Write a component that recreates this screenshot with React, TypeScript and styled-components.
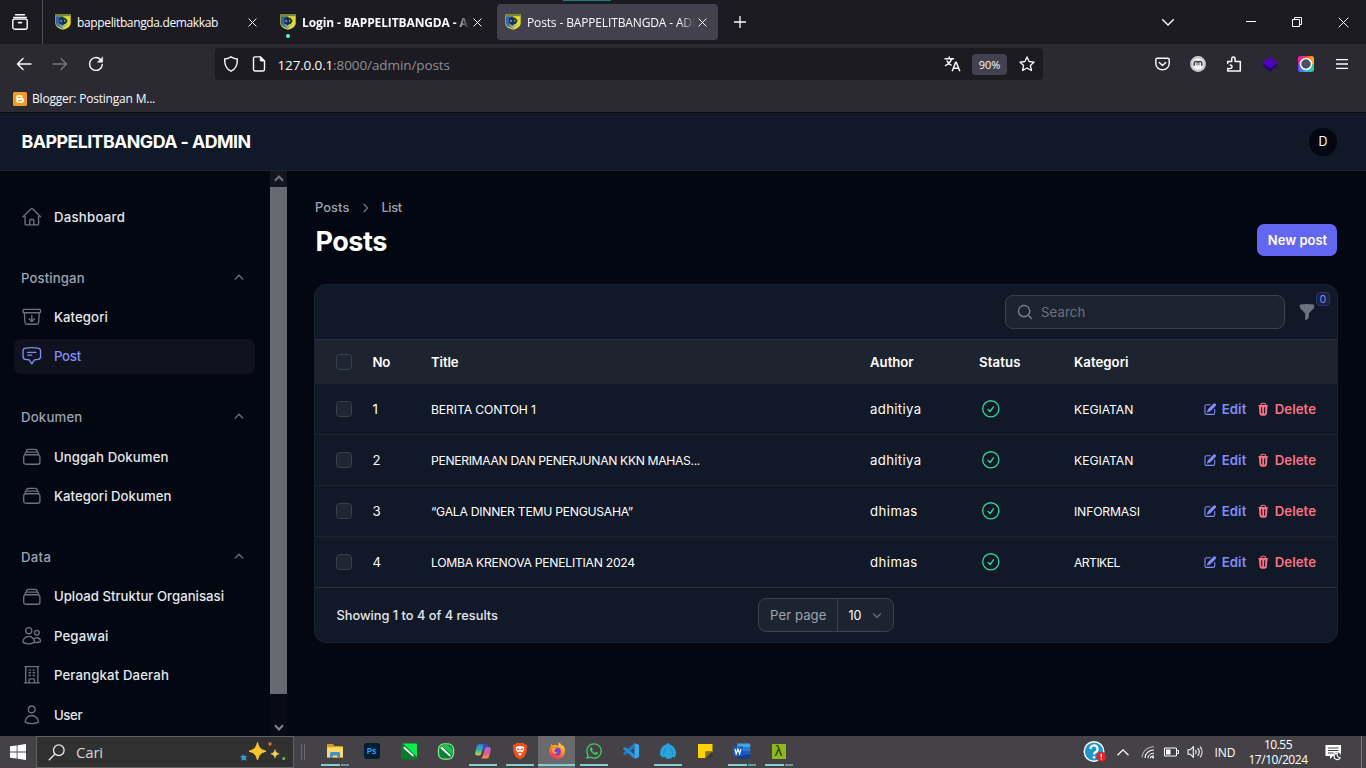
import React from "react";
import styled, { createGlobalStyle } from "styled-components";
import {
  HiOutlineHome,
  HiOutlineArchiveBoxArrowDown,
  HiOutlineChatBubbleBottomCenterText,
  HiOutlineRectangleStack,
  HiOutlineUsers,
  HiOutlineBuildingOffice,
  HiOutlineUser,
  HiOutlineCheckCircle,
  HiMiniChevronUp,
  HiMiniChevronDown,
  HiMiniChevronRight,
  HiMiniMagnifyingGlass,
  HiMiniFunnel,
  HiMiniPencilSquare,
  HiMiniTrash,
} from "react-icons/hi2";
import { FaWhatsapp } from "react-icons/fa";

const Global = createGlobalStyle`
  * { box-sizing: border-box; }
  body { margin: 0; background: #030712; overflow: hidden; }
  svg { display: block; flex: none; }
`;

const chromeFont = `"Open Sans", "Noto Sans", sans-serif`;
const appFont = `Inter, "Open Sans", sans-serif`;

type Track = { $track?: number };

const Screen = styled.div`
  display: flex;
  flex-direction: column;
  width: 1366px;
  height: 768px;
  overflow: hidden;
  font-family: ${appFont};
`;

const Label = styled.span<Track & { $caps?: boolean }>`
  letter-spacing: ${(p) => p.$track ?? 0}px;
  white-space: nowrap;
  ${(p) => p.$caps && "font-size: 12.2px;"}
`;

/* ---------- browser chrome ---------- */

const TabStrip = styled.div`
  display: flex;
  height: 44px;
  background: #1c1b22;
  color: #fbfbfe;
  font: 12px ${chromeFont};
`;

const RecentTabs = styled.div`
  display: flex;
  align-items: center;
  width: 43px;
  padding-left: 12px;
  border-right: 1px solid #4d4c55;
  margin-right: 4px;
`;

const Tab = styled.div<{ $active?: boolean; $bold?: boolean }>`
  position: relative;
  display: flex;
  align-items: center;
  width: 221px;
  height: 36px;
  margin: 4px 4px 0 0;
  padding: 0 11px 0 8px;
  border-radius: 4px;
  background: ${(p) => (p.$active ? "#42414d" : "transparent")};
  font-weight: ${(p) => (p.$bold ? 700 : 400)};
`;

const TabTitle = styled.div<{ $fade?: boolean } & Track>`
  flex: 1;
  margin: 0 3px 0 6px;
  overflow: hidden;
  white-space: nowrap;
  letter-spacing: ${(p) => p.$track ?? 0}px;
  ${(p) => p.$fade && "mask-image: linear-gradient(to right, #000 91%, transparent 100%);"}
`;

const UnreadDot = styled.i`
  position: absolute;
  left: 14px;
  top: 30px;
  width: 4px;
  height: 4px;
  border-radius: 50%;
  background: #54ffbd;
`;

const LoadStrip = styled.i`
  position: absolute;
  left: 66px;
  top: -4px;
  width: 48px;
  height: 1px;
  background: #1f7d7d;
`;

const NewTab = styled.div`
  display: flex;
  align-items: center;
  padding-left: 12px;
`;

const WindowButtons = styled.div`
  display: flex;
  align-items: center;
  margin-left: auto;
`;

const WindowButton = styled.div<{ $w: number }>`
  display: flex;
  justify-content: center;
  width: ${(p) => p.$w}px;
`;

const Toolbar = styled.div`
  display: flex;
  align-items: center;
  height: 40px;
  padding: 0 6px;
  background: #2b2a33;
  color: #fbfbfe;
  font-family: ${chromeFont};
`;

const ToolSlot = styled.div<{ $dim?: boolean }>`
  display: flex;
  align-items: center;
  justify-content: center;
  width: 36px;
  height: 32px;
  color: ${(p) => (p.$dim ? "#76757d" : "#fbfbfe")};
`;

const AddressBar = styled.div`
  display: flex;
  align-items: center;
  width: 828px;
  height: 32px;
  margin-left: 101px;
  padding: 0 8px;
  border-radius: 4px;
  background: #1c1b22;
  font-size: 13.5px;
  & > svg + svg { margin-left: 12px; }
`;

const Address = styled.div`
  flex: 1;
  margin-left: 10.5px;
  padding-top: 1px;
  color: #8f8e96;
  letter-spacing: -0.09px;
  b { font-weight: 400; color: #fbfbfe; letter-spacing: -0.15px; }
`;

const ZoomBadge = styled.div`
  width: 35px;
  height: 21px;
  margin: 0 12px 0 11px;
  border-radius: 4px;
  background: #42414d;
  font-size: 11px;
  line-height: 21px;
  text-align: center;
`;

const Extensions = styled.div`
  display: flex;
  margin-left: auto;
`;

const BookmarkBar = styled.div`
  display: flex;
  align-items: center;
  gap: 5px;
  height: 29px;
  padding: 1px 0 0 13px;
  border-bottom: 1px solid #0b0b12;
  background: #2b2a33;
  color: #fbfbfe;
  font: 12px ${chromeFont};
`;

/* ---------- admin app ---------- */

const TopBar = styled.header`
  display: flex;
  align-items: center;
  justify-content: space-between;
  height: 58px;
  padding: 0 29px 0 21.5px;
  border-bottom: 1px solid #1f2533;
  background: #111827;
`;

const Brand = styled.div`
  color: #fff;
  font-size: 17.8px;
  font-weight: 700;
  letter-spacing: -0.55px;
`;

const Avatar = styled.div`
  width: 28px;
  height: 28px;
  border-radius: 50%;
  background: #030712;
  color: #fff;
  font-size: 12.4px;
  line-height: 28px;
  text-align: center;
`;

const Body = styled.div`
  display: flex;
  height: 565px;
  background: #030712;
`;

const Sidebar = styled.nav`
  display: flex;
  flex-direction: column;
  gap: 26px;
  width: 270px;
  height: 565px;
  padding: 28px 15px 0 14px;
  overflow: hidden;
`;

const NavGroup = styled.div`
  display: flex;
  flex-direction: column;
  gap: 4.4px;
`;

const GroupHeader = styled.div`
  display: flex;
  align-items: center;
  justify-content: space-between;
  height: 35px;
  padding: 0 7px;
  color: #9ca3af;
  font-size: 13.2px;
  font-weight: 500;
  svg { color: #6b7280; }
`;

const NavItem = styled.a<{ $active?: boolean }>`
  display: flex;
  align-items: center;
  gap: 11.3px;
  height: 35px;
  padding: 0 7px;
  border-radius: 7px;
  background: ${(p) => (p.$active ? "#10131d" : "transparent")};
  color: ${(p) => (p.$active ? "#818cf8" : "#e5e7eb")};
  font-size: 13.2px;
  font-weight: 500;
  svg { color: ${(p) => (p.$active ? "#818cf8" : "#6b7280")}; }
`;

const ScrollTrack = styled.div`
  display: flex;
  flex-direction: column;
  width: 17px;
  background: #090b14;
`;

const ScrollArrow = styled.div<{ $h: number; $bg?: string }>`
  display: flex;
  align-items: flex-end;
  justify-content: center;
  height: ${(p) => p.$h}px;
  padding-bottom: 5px;
  background: ${(p) => p.$bg ?? "transparent"};
`;

const ScrollThumb = styled.div`
  height: 507px;
  background: #686971;
`;

const Main = styled.main`
  flex: 1;
  padding: 27px 29px 0 28px;
`;

const Crumbs = styled.div`
  display: flex;
  align-items: center;
  gap: 7px;
  height: 20px;
  margin-top: -0.5px;
  color: #9ca3af;
  font-size: 12.8px;
  font-weight: 500;
  svg { color: #6b7280; }
`;

const TitleRow = styled.div`
  display: flex;
  align-items: center;
  justify-content: space-between;
  height: 32px;
  margin: 6.5px 0 28px;
`;

const Heading = styled.h1`
  margin: 0;
  padding: 3px 0 0 0.5px;
  color: #fff;
  font-size: 27px;
  line-height: 32px;
  font-weight: 700;
  letter-spacing: -0.5px;
`;

const PrimaryButton = styled.button`
  width: 80px;
  height: 32px;
  padding: 0 0 0 1px;
  border: 0;
  border-radius: 7px;
  background: #6366f1;
  color: #fff;
  font: 600 13px ${appFont};
  letter-spacing: 0;
`;

const Card = styled.section`
  height: 359px;
  margin: 0 -1px;
  border: 1px solid #1a2130;
  border-radius: 12px;
  background: #111827;
  overflow: hidden;
  color: #fff;
  font-size: 13.2px;
`;

const CardTools = styled.div`
  display: flex;
  align-items: center;
  justify-content: flex-end;
  height: 54px;
  padding-right: 22px;
`;

const SearchBox = styled.div`
  display: flex;
  align-items: center;
  gap: 7px;
  width: 280px;
  height: 34px;
  padding: 0 0 1px 10px;
  border: 1px solid #3a424f;
  border-radius: 8px;
  background: #1d2431;
  color: #6b7280;
  svg { color: #7b828e; }
`;

const FilterButton = styled.div`
  position: relative;
  width: 18px;
  margin: 0 -1px 0 13px;
  color: #6b7280;
`;

const FilterCount = styled.span`
  position: absolute;
  left: 18px;
  top: -11px;
  width: 14px;
  height: 14px;
  border: 1px solid #303669;
  border-radius: 4px;
  background: #1a2040;
  color: #818cf8;
  font-size: 10.8px;
  line-height: 13px;
  text-align: center;
`;

const GridRow = styled.div<{ $head?: boolean; $last?: boolean }>`
  display: grid;
  grid-template-columns: 57.5px 58.5px 439px 109px 95px 100px 1fr;
  align-items: center;
  height: ${(p) => (p.$head ? 45 : 51)}px;
  padding-right: 21px;
  padding-bottom: ${(p) => (p.$head ? 1 : 0)}px;
  border-top: ${(p) => (p.$head ? "1px solid #29313d" : "0")};
  border-bottom: ${(p) => (p.$head ? "0" : p.$last ? "1px solid #29303d" : "1px solid #1d2431")};
  background: ${(p) => (p.$head ? "#1d2430" : "transparent")};
  font-weight: ${(p) => (p.$head ? 600 : 400)};
  & > svg { margin-left: 0.8px; }
`;

const CheckBox = styled.i`
  width: 16px;
  height: 16px;
  margin-left: 21px;
  border: 1px solid #3a414e;
  border-radius: 4px;
  background: #1f2532;
`;

const Actions = styled.div`
  display: flex;
  justify-content: flex-end;
  gap: 10px;
  font-weight: 600;
`;

const ActionLink = styled.a<{ $tone: string }>`
  display: flex;
  align-items: center;
  gap: 4px;
  color: ${(p) => p.$tone};
`;

const CardFooter = styled.div`
  display: grid;
  grid-template-columns: 1fr auto 1fr;
  align-items: center;
  height: 54px;
  padding-left: 21.5px;
`;

const Summary = styled.div`
  padding-top: 1px;
  color: #e5e7eb;
  font-size: 12.8px;
  font-weight: 500;
  letter-spacing: 0;
`;

const PageSize = styled.div`
  display: flex;
  align-items: center;
  width: 136px;
  height: 34px;
  margin-right: 21.5px;
  border: 1px solid #3a424f;
  border-radius: 8px;
  background: #1d2431;
`;

const PageSizeLabel = styled.div`
  width: 79px;
  height: 32px;
  line-height: 33px;
  padding-left: 11px;
  border-right: 1px solid #3a424f;
  color: #9ca3af;
`;

const PageSizeValue = styled.div`
  display: flex;
  flex: 1;
  align-items: center;
  justify-content: space-between;
  padding: 0 8px 0 10.5px;
  font-size: 12.6px;
  svg { color: #6b7280; }
`;

/* ---------- task bar ---------- */

const TaskBar = styled.footer`
  display: flex;
  height: 32px;
  background: #444246;
  color: #fff;
  font: 12px ${chromeFont};
`;

const StartButton = styled.div`
  width: 36px;
  padding: 8px 0 0 10px;
`;

const TaskSearch = styled.div`
  display: flex;
  align-items: center;
  width: 258px;
  padding: 0 6px 0 11px;
  border: 1px solid #626163;
  background: #313132;
  color: #d6d6d6;
  font-size: 15px;
`;

const SearchHint = styled.span`
  flex: 1;
  margin-left: 11px;
  letter-spacing: -0.2px;
`;

const Grip = styled.i`
  width: 4px;
  height: 16px;
  margin: 8px 11.5px 0 6.5px;
  border: solid #6a696c;
  border-width: 0 1px;
`;

const TaskCell = styled.div<{ $focus?: boolean }>`
  display: flex;
  flex-direction: column;
  align-items: center;
  width: 37px;
  padding-top: 6px;
  background: ${(p) => (p.$focus ? "#6a696c" : "transparent")};
`;

const TaskIcon = styled.div`
  display: flex;
  align-items: center;
  height: 18px;
`;

const RunningBar = styled.i<{ $wide?: boolean; $split?: boolean }>`
  width: ${(p) => (p.$wide ? 37 : 28)}px;
  height: 2px;
  margin-top: 4px;
  background: ${(p) =>
    p.$split ? "linear-gradient(to right, #83cfd2 19px, #444246 19px 20px, #639a9e 20px)" : "#83cfd2"};
`;

const Tray = styled.div`
  display: flex;
  align-items: center;
  margin-left: auto;
`;

const TraySlot = styled.div<{ $w: number }>`
  display: flex;
  justify-content: center;
  width: ${(p) => p.$w}px;
`;

const Clock = styled.div`
  width: 71px;
  padding-bottom: 1px;
  font-size: 12px;
  line-height: 15px;
  text-align: center;
`;

const DesktopEdge = styled.i`
  width: 1px;
  height: 32px;
  margin: 0 4px 0 8.5px;
  background: #77767a;
`;

/* ---------- drawings ---------- */

const Crest = () => (
  <svg width="16" height="16" viewBox="0 0 16 16">
    <path d="M.3.4h15.4v8.8c0 3-3.200 5.300-7.700 6.600C3.500 14.500.3 12.200.3 9.200z" fill="#e4dc2c" />
    <path d="M.8 2.200h7.400v12.600C4 13.300.8 11.600.8 9z" fill="#3565a8" />
    <path d="M.4.400h15.200v1.800H.4z" fill="#7c8438" />
    <path d="M4 4.200 7 3l3.500 1 2.200 2.500-1.500 3L8 11 4.400 9.200z" fill="#17324a" />
    <path d="M5 5.500 7.200 7 6 8.200z" fill="#b5d0dc" />
    <path d="m9 5.600 2 1-2 1.400z" fill="#7fae52" />
    <path d="M2.800 9.500 8 12.300l5-2.500L8 14.900z" fill="#9cae9f" />
  </svg>
);

const Cross = ({ size = 9, w = 1.1 }: { size?: number; w?: number }) => (
  <svg width={size} height={size} viewBox="0 0 10 10" stroke="#fbfbfe" strokeWidth={w}>
    <path d="m.6.6 8.800 8.800M9.400.6.6 9.400" />
  </svg>
);

const line = { fill: "none", stroke: "currentColor", strokeWidth: 1.4, strokeLinecap: "round", strokeLinejoin: "round" } as const;

const RecentIcon = () => (
  <svg width="16" height="16" viewBox="0 0 16 16" {...line}>
    <path d="M3.500.8h9M1.600 3.400h12.800" />
    <rect x=".8" y="5" width="14.400" height="10.200" rx="2" />
    <path d="M6.500 8.600h3" strokeWidth="1.600" />
  </svg>
);

const BackIcon = ({ flip }: { flip?: boolean }) => (
  <svg width="16" height="16" viewBox="0 0 16 16" {...line} transform={flip ? "scale(-1 1)" : undefined}>
    <path d="M15 8H1.500M7 2.500 1.500 8 7 13.500" />
  </svg>
);

const ReloadIcon = () => (
  <svg width="16" height="16" viewBox="0 0 16 16" {...line}>
    <path d="M14.300 8.500A6.400 6.400 0 1 1 12.500 3.500" />
    <path d="M14.600 1.200v5H9.600z" fill="currentColor" strokeWidth=".5" />
  </svg>
);

const ShieldIcon = () => (
  <svg width="16" height="16" viewBox="0 0 16 16" {...line}>
    <path d="M8 .8c2 1.300 4.200 2 6.300 2.200.3 5.500-1.500 9.800-6.300 12.200C3.200 12.800 1.400 8.500 1.700 3 3.800 2.800 6 2.100 8 .8z" />
  </svg>
);

const PageIcon = () => (
  <svg width="16" height="16" viewBox="0 0 16 16" {...line}>
    <path d="M2.500 2.300c0-.8.6-1.400 1.400-1.400H9.500l4 4v8.700c0 .8-.6 1.400-1.400 1.400H3.900c-.8 0-1.400-.6-1.400-1.400z" />
    <path d="M9.300 1v4h4z" fill="currentColor" strokeWidth=".8" />
  </svg>
);

const TranslateIcon = () => (
  <svg width="17" height="16" viewBox="0 0 17 16" {...line} strokeWidth="1.500" strokeLinecap="butt">
    <path d="M.5 2.700h9.500M5.200.4v2.300M1 9.800C4.500 8 7 5.800 7.700 2.700M2.800 4.500c.8 2 2.300 3.600 4.700 4.800" />
    <path d="m8.200 15.300 3.500-9h.6l3.500 9M9.400 12.300h5.200" />
  </svg>
);

const StarIcon = () => (
  <svg width="16" height="16" viewBox="0 0 16 16" {...line} strokeWidth="1.300">
    <path d="m8 .9 2.100 4.600 5 .6-3.700 3.400 1 5L8 12l-4.400 2.500 1-5L.9 6.100l5-.6z" />
  </svg>
);

const PocketIcon = () => (
  <svg width="15" height="16" viewBox="0 0 15 16" {...line}>
    <path d="M2.200 2.300h10.600c.8 0 1.400.6 1.400 1.400v3.800c0 3.700-3 6.300-6.700 6.300S.8 11.200.8 7.500V3.700c0-.8.6-1.400 1.400-1.400zM4.300 6.400l3.200 3 3.200-3" />
  </svg>
);

const MaskIcon = () => (
  <svg width="16" height="16" viewBox="0 0 16 16">
    <circle cx="8" cy="8" r="7.900" fill="#d4d4d8" />
    <circle cx="8" cy="8" r="6.400" fill="#f2f2f4" stroke="#a5a4aa" strokeWidth=".7" />
    <path d="M4.200 9.800V7.200c0-2 2.600-2 3.800-1 1.200-1 3.800-1 3.800 1v2.600" fill="none" stroke="#3d3c43" strokeWidth="1.600" />
    <path d="M7 6.800v2.500M9 6.800v2.500" stroke="#3d3c43" strokeWidth=".9" />
  </svg>
);

const PuzzleIcon = () => (
  <svg width="16" height="16" viewBox="0 0 16 16" {...line} strokeWidth="1.500">
    <path d="M1.700 7.300V5.500h4V2.800a1.700 1.700 0 0 1 3.400 0v2.700h5.200v9.600H1.700v-2.500h2.500a1.800 1.800 0 0 0 0-3.600" />
  </svg>
);

const DiamondIcon = () => (
  <svg width="16" height="16" viewBox="0 0 16 16">
    <path d="M8 4.500 15.800 9.200 8 15.800.2 9.200z" fill="#230273" />
    <path d="M8 .2 15.800 7 8 12.600.2 7z" fill="#4c05b5" />
  </svg>
);

const LensIcon = () => (
  <svg width="16" height="16" viewBox="0 0 16 16">
    <defs>
      <linearGradient id="lensTop" x1="0" x2="1">
        <stop offset="0" stopColor="#e91ec2" />
        <stop offset=".45" stopColor="#f5333f" />
        <stop offset="1" stopColor="#f7b91c" />
      </linearGradient>
      <linearGradient id="lensBottom" x1="0" x2="1">
        <stop offset="0" stopColor="#6b45ff" />
        <stop offset=".5" stopColor="#28b7f2" />
        <stop offset="1" stopColor="#2fd07a" />
      </linearGradient>
    </defs>
    <path d="M0 8V2.500A2.500 2.500 0 0 1 2.500 0h11A2.500 2.500 0 0 1 16 2.500V8z" fill="url(#lensTop)" />
    <path d="M0 8h16v5.500a2.500 2.500 0 0 1-2.500 2.500h-11A2.500 2.500 0 0 1 0 13.500z" fill="url(#lensBottom)" />
    <circle cx="8" cy="8" r="5.500" fill="#4a5060" stroke="#fff" strokeWidth="1.500" />
  </svg>
);

const MenuIcon = () => (
  <svg width="12" height="10" viewBox="0 0 12 10" stroke="#fbfbfe" strokeWidth="1.300">
    <path d="M0 .7h12M0 5h12M0 9.300h12" />
  </svg>
);

const BloggerIcon = () => (
  <svg width="14" height="14" viewBox="0 0 14 14">
    <rect width="14" height="14" rx="1.500" fill="#f79a1f" />
    <path d="M3.300 5a2 2 0 0 1 2-2h2.200a2 2 0 0 1 2 2c0 .9.100 1.200.700 1.300.4.100.6.300.6.900V9a2 2 0 0 1-2 2H5.300a2 2 0 0 1-2-2z" fill="#fff" />
    <path d="M5.500 5.400h1.600M5.500 8.600h3" stroke="#f79a1f" strokeWidth="1.100" strokeLinecap="round" />
  </svg>
);

const WindowsLogo = () => (
  <svg width="16" height="16" viewBox="0 0 16 16" fill="#fff">
    <path d="M0 2.300 6.700 1.400v6.200H0zM7.500 1.300 16 .1v7.500H7.500zM0 8.400h6.700v6.200L0 13.700zM7.500 8.400H16v7.500l-8.500-1.200z" />
  </svg>
);

const MagnifierIcon = () => (
  <svg width="17" height="17" viewBox="0 0 17 17" fill="none" stroke="#e8e8e8" strokeWidth="1.300">
    <circle cx="10.800" cy="6.200" r="5.300" />
    <path d="M7 10 .8 16.200" />
  </svg>
);

const Sparkles = () => (
  <svg width="48" height="24" viewBox="0 0 48 24">
    <path d="M18.500 2.500c1.500 5.500 3 7 8.500 8.700-5.500 1.700-7 3.200-8.500 8.800-1.500-5.600-3-7.100-8.500-8.800 5.500-1.700 7-3.200 8.500-8.700z" fill="#fbc52a" stroke="#fbc52a" strokeLinejoin="round" />
    <path d="M36 9.500c.7 2.700 1.500 3.500 4.200 4.300-2.700.800-3.500 1.600-4.200 4.300-.7-2.700-1.500-3.500-4.200-4.300 2.700-.8 3.500-1.600 4.200-4.300z" fill="#f8d257" stroke="#f8d257" strokeWidth=".5" strokeLinejoin="round" />
    <path d="m4 14 1.500 2 2.300-.2-1 2.300.8 2.400-2.700-.8-2.500 1.100.300-2.700L1 16.300l2.400-.200z" fill="#2e9bd8" />
    <circle cx="31" cy="4" r="1.700" fill="#e0702f" />
    <circle cx="44.800" cy="18.500" r="1.500" fill="#79b84a" />
  </svg>
);

const FolderIcon = () => (
  <svg width="18" height="18" viewBox="0 0 18 18">
    <path d="M1 2h6l1.500 2H17v12H1z" fill="#d69a1d" />
    <path d="M1 5.200h16V15H1z" fill="#fbd96b" />
    <path d="M4 16v-4.500c0-1 .6-1.600 1.600-1.600h6.800c1 0 1.600.6 1.600 1.600V16h-2.700v-2.500H6.700V16z" fill="#3f8fd1" />
  </svg>
);

const PsTile = styled.div`
  width: 16px;
  height: 16px;
  border-radius: 3px;
  background: #001d34;
  color: #31a8ff;
  font: 600 9px/15px ${chromeFont};
  text-align: center;
`;

const CorelIcon = ({ round }: { round?: boolean }) => (
  <svg width="18" height="17" viewBox="0 0 18 17">
    {round ? (
      <>
        <rect x="1.500" y=".8" width="15" height="15.400" rx="5.500" fill="#07803a" stroke="#8be68a" strokeWidth="1.300" />
        <path d="M4 2.500A8 8 0 0 1 15.500 8v4z" fill="#1fc24b" />
      </>
    ) : (
      <>
        <rect x="1" y=".5" width="16" height="16" rx="1" fill="#087a2a" />
        <path d="M3 .5h13a1 1 0 0 1 1 1V14z" fill="#0aee4b" />
      </>
    )}
    <path d="m4.500 3.500 8.500 8 1.200 2.200-2.400-.9-8.600-7.700z" fill="#fff" />
  </svg>
);

const CopilotIcon = () => (
  <svg width="18" height="18" viewBox="0 0 18 18">
    <defs>
      <linearGradient id="copA" x1="0" y1="0" x2="0" y2="1">
        <stop offset="0" stopColor="#2b7de0" />
        <stop offset=".6" stopColor="#3dbb9b" />
        <stop offset="1" stopColor="#e9c93b" />
      </linearGradient>
      <linearGradient id="copB" x1="0" y1="0" x2="0" y2="1">
        <stop offset="0" stopColor="#a46be8" />
        <stop offset=".55" stopColor="#e0598e" />
        <stop offset="1" stopColor="#f59a45" />
      </linearGradient>
    </defs>
    <path d="M5.500 2h5.800c-1.500.6-2 2-2.500 4L7.300 11.500c-.5 1.500-1.300 2-2.600 2H3.500C1.500 13.500.8 12 1.300 10l1.400-5.500C3.200 2.800 4 2 5.500 2z" fill="url(#copA)" />
    <path d="M12.500 16.500H6.700c1.500-.6 2-2 2.500-4L10.700 7c.5-1.500 1.300-2 2.600-2h1.200c2 0 2.700 1.500 2.200 3.500L15.300 14c-.5 1.700-1.300 2.500-2.800 2.500z" fill="url(#copB)" />
    <path d="M8.500 2h3c1.500 0 2 .8 2.500 3-2.200 0-3 .6-3.600 2.600L9 12c0-3 .5-6-.5-10z" fill="#2a50c4" />
  </svg>
);

const BraveIcon = () => (
  <svg width="18" height="18" viewBox="0 0 18 18">
    <path d="M5.500 1h7l1.300 1.500 1.700-.1.800 2.600-.8 1.500.5 2-2.300 6L9 17.500 4.300 14.500 2 8.500l.5-2L1.700 5l.8-2.600 1.700.1z" fill="#f0501f" />
    <path d="M5 4.700 9 4l4 .7.300 2.500-1.800 3L9 9.400l-2.500.8-1.800-3zM6.800 11.800 9 10.800l2.200 1L9 13.800z" fill="#fff" />
    <path d="m5.800 6.200 2 .6L9 8.500l1.200-1.700 2-.6-.6 2L9 7.800l-2.600.4z" fill="#f0501f" />
  </svg>
);

const FirefoxIcon = () => (
  <svg width="18" height="18" viewBox="0 0 18 18">
    <defs>
      <linearGradient id="fox" x1=".8" y1="0" x2=".2" y2="1">
        <stop offset="0" stopColor="#ffdf3d" />
        <stop offset=".45" stopColor="#ff8a1f" />
        <stop offset="1" stopColor="#f0246b" />
      </linearGradient>
    </defs>
    <path d="M9.500 3.700c1-.8 1.300-2 1.200-3.200 2 1 3 2.300 3.500 3.700l.6-1.200c1.600 1.800 2.300 4 2.200 6.300A8 8 0 1 1 2.800 4l.3-2.200 1.600 1.800c1.600-.7 3.300-.6 4.800.1z" fill="url(#fox)" />
    <circle cx="9" cy="9.500" r="3.900" fill="#7a3bd6" />
    <path d="M4 6.500c2-1.500 3.500-.5 4.800.3-1.500.1-2.300 1-2.300 2 0 1.500 1.700 2.200 3.300 1.700-1 2-5 1.700-5.600-1z" fill="#ffa42b" />
  </svg>
);

const VsCodeIcon = () => (
  <svg width="18" height="18" viewBox="0 0 18 18">
    <path d="m12.500 1 4.500 2v12l-4.500 2z" fill="#35a9f2" />
    <path d="M12.500 1v4.700L3.200 13 1 11.700v-.5z" fill="#1d7fc9" />
    <path d="M12.500 17v-4.700L3.200 5 1 6.300v.5z" fill="#2490dc" />
  </svg>
);

const DolphinIcon = () => (
  <svg width="18" height="18" viewBox="0 0 18 18">
    <path d="M1.300 13.500C.6 8 2.800 3.800 7 2.500L9.500.8l1.200 1.700c4.500 1.200 7 6 6.200 10.500l-1.500 2.500-2.300-.8-.6 1.600-3 .6-2.600-.4-.6-1.700-1.900.8z" fill="#27a5dd" />
    <path d="M6.500 6c-1.500 2-2 4.500-1.500 7M10.500 5.500c2.500 2 3.500 5 3 7.500" stroke="#1779ad" strokeWidth=".7" fill="none" />
  </svg>
);

const NotesIcon = () => (
  <svg width="18" height="18" viewBox="0 0 18 18">
    <path d="M2 2h14.500v8.500L10 16H2z" fill="#fdd302" />
    <path d="M16.500 9.500V16H9.500V9.500z" fill="#3a3a3c" />
    <path d="M9.500 16V9.500h7z" fill="#8b7413" />
  </svg>
);

const WordIcon = () => (
  <svg width="18" height="18" viewBox="0 0 18 18">
    <path d="M4.500 1.500h12A.8.800 0 0 1 17.300 2.300V5H4z" fill="#41a5ee" />
    <path d="M4 5h13.300v4H4z" fill="#2b7cd3" />
    <path d="M4 9h13.300v3.800H4z" fill="#185abd" />
    <path d="M4 12.800h13.300v2.900a.8.800 0 0 1-.8.800H4.800a.8.800 0 0 1-.8-.8z" fill="#103f91" />
    <rect x="0" y="4.500" width="10" height="9.500" rx="1" fill="#185abd" />
    <path d="m2 6.800 1.200 5 1.700-4.800 1.700 4.800 1.300-5" fill="none" stroke="#fff" strokeWidth="1.200" />
  </svg>
);

const LambdaTile = styled.div`
  width: 14px;
  height: 15px;
  background: #8cb91c;
  color: #283a10;
  font: 14px/14px "DejaVu Sans", sans-serif;
  text-align: center;
`;

const HelpBadge = () => (
  <svg width="24" height="24" viewBox="0 0 24 24">
    <circle cx="11" cy="11.500" r="9.800" fill="#2096cf" stroke="#fff" strokeWidth="1.400" />
    <path d="M7.500 9a3.500 3.500 0 1 1 5.200 3c-1.200.7-1.700 1.200-1.700 2.600" fill="none" stroke="#fff" strokeWidth="2.200" />
    <circle cx="11" cy="17.200" r="1.300" fill="#fff" />
    <circle cx="18.300" cy="16.700" r="5" fill="#e02424" />
    <path d="M18.300 13.800v3.500M18.300 18.400v1.200" stroke="#fff" strokeWidth="1.400" />
  </svg>
);

const UpIcon = () => (
  <svg width="12" height="7" viewBox="0 0 12 7" fill="none" stroke="#fff" strokeWidth="1.200">
    <path d="M.5 6.300 6 .9l5.500 5.400" />
  </svg>
);

const WifiIcon = () => (
  <svg width="14" height="14" viewBox="0 0 14 14" fill="none" stroke="#fff" strokeWidth="1.100">
    <path d="M1 12.500A11.500 11.500 0 0 1 13 1.800" opacity=".6" />
    <path d="M4 13A8.500 8.500 0 0 1 13 5M6.800 13.200A6 6 0 0 1 13 8.300M9.200 13.300a4 4 0 0 1 3.800-2.500" />
    <circle cx="12" cy="12.600" r="1" fill="#fff" stroke="none" />
  </svg>
);

const BatteryIcon = () => (
  <svg width="15" height="10" viewBox="0 0 15 10">
    <path d="M.5 1h12v8H.5zM13 3.500h1.500v3H13" fill="none" stroke="#fff" />
    <path d="M2 2.500h4.500v5H2z" fill="#fff" />
  </svg>
);

const VolumeIcon = () => (
  <svg width="17" height="14" viewBox="0 0 17 14" fill="none" stroke="#fff" strokeWidth="1.100">
    <path d="M1 4.800h2.300l3-3v10.400l-3-3H1z" />
    <path d="M8.500 4.800c.9 1.300.9 3.100 0 4.400M10.700 3.200c1.800 2.200 1.800 5.400 0 7.600M13 1.600c2.700 3.200 2.700 7.600 0 10.800" />
  </svg>
);

const NoticeIcon = () => (
  <svg width="17" height="17" viewBox="0 0 17 17">
    <path d="M.5 1h15.500v11H8l-3 3v-3H.5z" fill="#fff" />
    <path d="M3 4h10.500M3 6.500h10.500M3 9h5.500" stroke="#444246" />
    <circle cx="12.300" cy="12" r="3.600" fill="#444246" />
    <path d="M12.300 9.200a3.300 3.300 0 0 0 2.900 4.500 3.200 3.200 0 1 1-2.900-4.500z" fill="none" stroke="#fff" strokeWidth="1.100" />
  </svg>
);

/* ---------- data ---------- */

type Item = { text: string; icon: React.ComponentType<any>; track: number; active?: boolean };
type Group = { title?: string; track?: number; items: Item[] };

const groups: Group[] = [
  { items: [{ text: "Dashboard", icon: HiOutlineHome, track: 0.27 }] },
  {
    title: "Postingan",
    track: 0.1,
    items: [
      { text: "Kategori", icon: HiOutlineArchiveBoxArrowDown, track: 0.08 },
      { text: "Post", icon: HiOutlineChatBubbleBottomCenterText, track: -0.18, active: true },
    ],
  },
  {
    title: "Dokumen",
    track: 0.18,
    items: [
      { text: "Unggah Dokumen", icon: HiOutlineRectangleStack, track: 0.11 },
      { text: "Kategori Dokumen", icon: HiOutlineRectangleStack, track: 0.03 },
    ],
  },
  {
    title: "Data",
    track: 0.3,
    items: [
      { text: "Upload Struktur Organisasi", icon: HiOutlineRectangleStack, track: 0.01 },
      { text: "Pegawai", icon: HiOutlineUsers, track: 0.17 },
      { text: "Perangkat Daerah", icon: HiOutlineBuildingOffice, track: 0.14 },
      { text: "User", icon: HiOutlineUser, track: -0.35 },
    ],
  },
];

const posts = [
  { title: "BERITA CONTOH 1", tt: -0.12, author: "adhitiya", at: 0.34, kategori: "KEGIATAN", kt: -0.04 },
  { title: "PENERIMAAN DAN PENERJUNAN KKN MAHAS...", tt: -0.36, author: "adhitiya", at: 0.34, kategori: "KEGIATAN", kt: -0.04 },
  { title: "“GALA DINNER TEMU PENGUSAHA”", tt: -0.27, author: "dhimas", at: 0.46, kategori: "INFORMASI", kt: -0.16 },
  { title: "LOMBA KRENOVA PENELITIAN 2024", tt: -0.27, author: "dhimas", at: 0.46, kategori: "ARTIKEL", kt: -0.58 },
];

const tasks: { icon: React.ReactNode; run?: boolean; split?: boolean; focus?: boolean }[] = [
  { icon: <FolderIcon />, run: true, split: true },
  { icon: <PsTile>Ps</PsTile> },
  { icon: <CorelIcon /> },
  { icon: <CorelIcon round /> },
  { icon: <CopilotIcon />, run: true },
  { icon: <BraveIcon />, run: true },
  { icon: <FirefoxIcon />, run: true, focus: true },
  { icon: <FaWhatsapp size={18} color="#3fce6a" />, run: true },
  { icon: <VsCodeIcon /> },
  { icon: <DolphinIcon />, run: true },
  { icon: <NotesIcon /> },
  { icon: <WordIcon />, run: true, split: true },
  { icon: <LambdaTile>λ</LambdaTile>, run: true, split: true },
];

/* ---------- sections ---------- */

const Browser = () => (
  <>
    <TabStrip>
      <RecentTabs><RecentIcon /></RecentTabs>
      <Tab>
        <Crest />
        <TabTitle $track={-0.36}>bappelitbangda.demakkab</TabTitle>
        <Cross />
      </Tab>
      <Tab $bold>
        <Crest />
        <TabTitle $fade $track={-0.12}>Login - BAPPELITBANGDA - AD</TabTitle>
        <Cross />
        <UnreadDot />
      </Tab>
      <Tab $active>
        <Crest />
        <TabTitle $fade $track={-0.14}>Posts - BAPPELITBANGDA - ADM</TabTitle>
        <Cross />
        <LoadStrip />
      </Tab>
      <NewTab>
        <svg width="12" height="12" viewBox="0 0 12 12" stroke="#fbfbfe" strokeWidth="1.300"><path d="M6 0v12M0 6h12" /></svg>
      </NewTab>
      <WindowButtons>
        <WindowButton $w={120}>
          <svg width="12" height="7" viewBox="0 0 12 7" {...line}><path d="m.7.7 5.300 5.300L11.300.7" /></svg>
        </WindowButton>
        <WindowButton $w={46}>
          <svg width="10" height="10" viewBox="0 0 10 10" stroke="#fff"><path d="M0 4.500h10" /></svg>
        </WindowButton>
        <WindowButton $w={46}>
          <svg width="10" height="10" viewBox="0 0 10 10" fill="none" stroke="#fff"><path d="M.5 2.500h7v7h-7zM2.500 2.500v-2h7v7h-2" /></svg>
        </WindowButton>
        <WindowButton $w={46}><Cross size={11} w={0.9} /></WindowButton>
      </WindowButtons>
    </TabStrip>
    <Toolbar>
      <ToolSlot><BackIcon /></ToolSlot>
      <ToolSlot $dim><BackIcon flip /></ToolSlot>
      <ToolSlot><ReloadIcon /></ToolSlot>
      <AddressBar>
        <ShieldIcon />
        <PageIcon />
        <Address><b>127.0.0.1</b>:8000/admin/posts</Address>
        <TranslateIcon />
        <ZoomBadge>90%</ZoomBadge>
        <StarIcon />
      </AddressBar>
      <Extensions>
        <ToolSlot><PocketIcon /></ToolSlot>
        <ToolSlot><MaskIcon /></ToolSlot>
        <ToolSlot><PuzzleIcon /></ToolSlot>
        <ToolSlot><DiamondIcon /></ToolSlot>
        <ToolSlot><LensIcon /></ToolSlot>
        <ToolSlot><MenuIcon /></ToolSlot>
      </Extensions>
    </Toolbar>
    <BookmarkBar>
      <BloggerIcon />
      <Label $track={-0.2}>Blogger: Postingan M...</Label>
    </BookmarkBar>
  </>
);

const Navigation = () => (
  <Sidebar>
    {groups.map((g, i) => (
      <NavGroup key={i}>
        {g.title && (
          <GroupHeader>
            <Label $track={g.track}>{g.title}</Label>
            <HiMiniChevronUp size={18} />
          </GroupHeader>
        )}
        {g.items.map((it) => (
          <NavItem key={it.text} $active={it.active}>
            <it.icon size={21.6} />
            <Label $track={it.track}>{it.text}</Label>
          </NavItem>
        ))}
      </NavGroup>
    ))}
  </Sidebar>
);

const PostsCard = () => (
  <Card>
    <CardTools>
      <SearchBox>
        <HiMiniMagnifyingGlass size={18} />
        <Label $track={0.1}>Search</Label>
      </SearchBox>
      <FilterButton>
        <HiMiniFunnel size={18} />
        <FilterCount>0</FilterCount>
      </FilterButton>
    </CardTools>
    <GridRow $head>
      <CheckBox />
      <Label $track={-0.2}>No</Label>
      <Label $track={-0.12}>Title</Label>
      <Label $track={-0.02}>Author</Label>
      <Label $track={0.12}>Status</Label>
      <Label $track={0.03}>Kategori</Label>
    </GridRow>
    {posts.map((p, i) => (
      <GridRow key={i} $last={i === posts.length - 1}>
        <CheckBox />
        <Label>{i + 1}</Label>
        <Label $caps $track={p.tt}>{p.title}</Label>
        <Label $track={p.at}>{p.author}</Label>
        <HiOutlineCheckCircle size={21.6} color="#34d399" />
        <Label $caps $track={p.kt}>{p.kategori}</Label>
        <Actions>
          <ActionLink $tone="#818cf8"><HiMiniPencilSquare size={14.4} /><Label $track={0.1}>Edit</Label></ActionLink>
          <ActionLink $tone="#fb7185"><HiMiniTrash size={14.4} /><Label $track={0.05}>Delete</Label></ActionLink>
        </Actions>
      </GridRow>
    ))}
    <CardFooter>
      <Summary>Showing 1 to 4 of 4 results</Summary>
      <PageSize>
        <PageSizeLabel><Label $track={0.05}>Per page</Label></PageSizeLabel>
        <PageSizeValue>10<HiMiniChevronDown size={16} /></PageSizeValue>
      </PageSize>
    </CardFooter>
  </Card>
);

const SystemBar = () => (
  <TaskBar>
    <StartButton><WindowsLogo /></StartButton>
    <TaskSearch>
      <MagnifierIcon />
      <SearchHint>Cari</SearchHint>
      <Sparkles />
    </TaskSearch>
    <Grip />
    {tasks.map((t, i) => (
      <TaskCell key={i} $focus={t.focus}>
        <TaskIcon>{t.icon}</TaskIcon>
        {t.run && <RunningBar $wide={t.focus} $split={t.split} />}
      </TaskCell>
    ))}
    <Tray>
      <TraySlot $w={30}><HelpBadge /></TraySlot>
      <TraySlot $w={26}><UpIcon /></TraySlot>
      <TraySlot $w={24}><WifiIcon /></TraySlot>
      <TraySlot $w={23}><BatteryIcon /></TraySlot>
      <TraySlot $w={25}><VolumeIcon /></TraySlot>
      <TraySlot $w={35}>IND</TraySlot>
      <Clock>
        <Label $track={-0.5}>10.55</Label>
        <br />
        <Label $track={-0.45}>17/10/2024</Label>
      </Clock>
      <TraySlot $w={39}><NoticeIcon /></TraySlot>
      <DesktopEdge />
    </Tray>
  </TaskBar>
);

export default function App() {
  return (
    <Screen>
      <Global />
      <Browser />
      <TopBar>
        <Brand>BAPPELITBANGDA - ADMIN</Brand>
        <Avatar>D</Avatar>
      </TopBar>
      <Body>
        <Navigation />
        <ScrollTrack>
          <ScrollArrow $h={16} $bg="#14161f">
            <svg width="10" height="7" viewBox="0 0 10 7" fill="none" stroke="#6f7178" strokeWidth="2"><path d="M1 5.800 5 1.500l4 4.300" /></svg>
          </ScrollArrow>
          <ScrollThumb />
          <ScrollArrow $h={42}>
            <svg width="10" height="7" viewBox="0 0 10 7" fill="none" stroke="#85868c" strokeWidth="2"><path d="M1 1.200 5 5.500l4-4.300" /></svg>
          </ScrollArrow>
        </ScrollTrack>
        <Main>
          <Crumbs>
            <Label $track={0.1}>Posts</Label>
            <HiMiniChevronRight size={18} />
            <Label $track={-0.3}>List</Label>
          </Crumbs>
          <TitleRow>
            <Heading>Posts</Heading>
            <PrimaryButton>New post</PrimaryButton>
          </TitleRow>
          <PostsCard />
        </Main>
      </Body>
      <SystemBar />
    </Screen>
  );
}
